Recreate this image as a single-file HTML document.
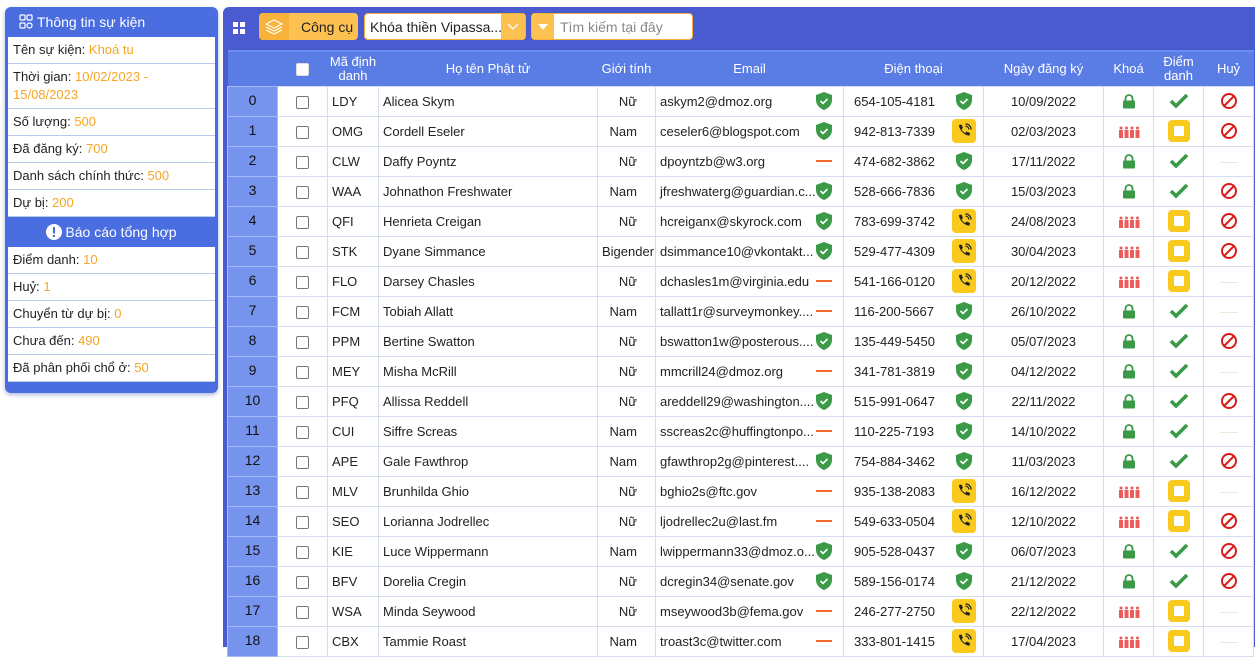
<!DOCTYPE html>
<html><head><meta charset="utf-8">
<style>
*{box-sizing:border-box;margin:0;padding:0}
body{width:1255px;height:642px;overflow:hidden;background:#fff;font-family:"Liberation Sans",sans-serif;font-size:13px;color:#222;position:relative}
.o{color:#f5a623}
#left{position:absolute;left:5px;top:7px;width:213px;height:386px;background:#4a6de0;border-radius:6px;box-shadow:0 2px 4px rgba(60,80,180,.4)}
#left .hd{height:30px;color:#fff;font-size:14px;display:flex;align-items:center;padding-left:14px}
#left .it{background:#fff;margin:0 3px 0 3px;border-bottom:1px solid #b9cbea;padding:4px 4px 4px 5px;line-height:18px;font-size:13px}
#main{position:absolute;left:223px;top:7px;width:1034px;height:640px;background:#4a5bcf;border-radius:6px 0 0 0}
.tb{position:absolute;top:6px;height:27px;border-radius:4px}
table{position:absolute;left:4px;top:43px;border-collapse:collapse;table-layout:fixed;width:1026px}
th{background:#5a7de5;color:#fff;font-weight:normal;height:35px;font-size:13px;line-height:14px;border-top:2px solid #6b8cf0}
td{height:30px;background:#fff;border:1px solid #d5deef;padding:0 4px;white-space:nowrap;overflow:hidden}
td.i{background:#7694ee;color:#111;text-align:center;font-size:14px;border-color:#a6baf3;vertical-align:top;padding-top:5px}
td.c{text-align:center}
td.g{text-align:right;padding-right:18px}
.cb{display:inline-block;width:13px;height:13px;border:1px solid #777;border-radius:2px;background:#fff;vertical-align:middle}
td.e,td.p{position:relative}
td.p{padding-left:10px}
.ic{position:absolute;top:50%;transform:translate(-50%,-50%)}
td.e .ic{left:168px}td.p .ic{left:120px}
.dash{display:inline-block;width:16px;height:2px;background:#f26b2a}
.fd{display:inline-block;width:18px;height:1px;background:#efe6d6;vertical-align:middle}
.ph{width:24px;height:24px;background:#f9c91e;border-radius:4px;display:flex;align-items:center;justify-content:center}
.bx{display:inline-block;width:22px;height:22px;background:#f9c91e;border-radius:4px;vertical-align:middle;position:relative}
.bx:after{content:"";position:absolute;left:6px;top:6px;width:10px;height:10px;background:#fff;border-radius:1px}
svg{vertical-align:middle}
</style></head><body>
<svg width="0" height="0" style="position:absolute">
<defs>
<symbol id="sh" viewBox="0 0 20 20"><path d="M10 1L18 4V9C18 14 14 17.5 10 19C6 17.5 2 14 2 9V4Z" fill="#3a9a48"/><polyline points="6.5,10 9,12.5 13.5,8" fill="none" stroke="#fff" stroke-width="1.6"/></symbol>
<symbol id="lk" viewBox="0 0 16 16"><path d="M4.5 8V5.5a3.5 3.5 0 0 1 7 0V8" fill="none" stroke="#3a9a48" stroke-width="1.8"/><rect x="2" y="7.5" width="12" height="8" rx="1" fill="#3a9a48"/></symbol>
<symbol id="pp" viewBox="0 0 22 12"><g fill="#ee5b5b"><circle cx="3" cy="2" r="1.5"/><rect x="1" y="4" width="4" height="8"/><circle cx="8.5" cy="2" r="1.5"/><rect x="6.5" y="4" width="4" height="8"/><circle cx="14" cy="2" r="1.5"/><rect x="12" y="4" width="4" height="8"/><circle cx="19.5" cy="2" r="1.5"/><rect x="17.5" y="4" width="4" height="8"/></g></symbol>
<symbol id="ck" viewBox="0 0 20 16"><polyline points="2,8 7,13 18,2" fill="none" stroke="#3a9a48" stroke-width="3.6"/></symbol>
<symbol id="bn" viewBox="0 0 18 18"><circle cx="9" cy="9" r="7" fill="none" stroke="#d81b1b" stroke-width="2"/><line x1="4" y1="14" x2="14" y2="4" stroke="#d81b1b" stroke-width="2"/></symbol>
<symbol id="tel" viewBox="0 0 16 16"><path d="M3 2l2.5-.5 1.5 3.5-1.5 1.2c.8 1.8 2 3 3.8 3.8l1.2-1.5 3.5 1.5-.5 2.5C9 13 3 7 3 2z" fill="#222"/><path d="M9.5 3a4 4 0 0 1 3.5 3.5M9.5 .8a6 6 0 0 1 5.7 5.7" fill="none" stroke="#222" stroke-width="1.2"/></symbol>
</defs></svg>

<div id="left">
 <div class="hd"><svg width="18" height="16" viewBox="0 0 18 16"><g fill="none" stroke="#fff" stroke-width="1.2"><rect x="1" y="1" width="5" height="5" rx="1"/><rect x="8" y="1" width="5" height="5" rx="1"/><rect x="1" y="9" width="5" height="5" rx="1"/><circle cx="10.5" cy="11.5" r="2.5"/></g></svg>Thông tin sự kiện</div>
 <div class="it">Tên sự kiện: <span class="o">Khoá tu</span></div>
 <div class="it">Thời gian: <span class="o">10/02/2023 - 15/08/2023</span></div>
 <div class="it">Số lượng: <span class="o">500</span></div>
 <div class="it">Đã đăng ký: <span class="o">700</span></div>
 <div class="it">Danh sách chính thức: <span class="o">500</span></div>
 <div class="it">Dự bị: <span class="o">200</span></div>
 <div class="hd" style="justify-content:center;padding-left:0"><svg width="16" height="16" viewBox="0 0 16 16" style="margin-right:3px"><circle cx="8" cy="8" r="8" fill="#fff"/><rect x="7" y="3" width="2" height="6.5" fill="#4a6de0"/><rect x="7" y="11" width="2" height="2" fill="#4a6de0"/></svg>Báo cáo tổng hợp</div>
 <div class="it">Điểm danh: <span class="o">10</span></div>
 <div class="it">Huỷ: <span class="o">1</span></div>
 <div class="it">Chuyển từ dự bị: <span class="o">0</span></div>
 <div class="it">Chưa đến: <span class="o">490</span></div>
 <div class="it">Đã phân phối chổ ở: <span class="o">50</span></div>
</div>

<div id="main">
 <svg style="position:absolute;left:10px;top:15px" width="12" height="12" viewBox="0 0 12 12"><g fill="#fff"><rect width="5" height="5"/><rect x="7" width="5" height="5"/><rect y="7" width="5" height="5"/><rect x="7" y="7" width="5" height="5"/></g></svg>
 <div class="tb" style="left:36px;width:99px;background:#fdc152;display:flex;align-items:center">
  <div style="width:30px;height:27px;background:#f9b33a;border-radius:4px 0 0 4px;display:flex;align-items:center;justify-content:center"><svg width="18" height="16" viewBox="0 0 18 16"><g fill="none" stroke="#fff" stroke-width="1.2"><path d="M9 1L17 5 9 9 1 5Z"/><path d="M1 8l8 4 8-4"/><path d="M1 11l8 4 8-4"/></g></svg></div>
  <span style="margin-left:12px;color:#222;font-size:14px">Công cụ</span></div>
 <div class="tb" style="left:141px;width:162px;background:#fff;border:1px solid #f9b33a;display:flex;align-items:center;padding-left:5px;font-size:14px">Khóa thiền Vipassa...
  <div style="position:absolute;right:0;top:0;width:24px;height:25px;background:#fdc152;display:flex;align-items:center;justify-content:center"><svg width="12" height="8" viewBox="0 0 12 8"><polyline points="1,1 6,6 11,1" fill="none" stroke="#fff" stroke-width="1.3"/></svg></div></div>
 <div class="tb" style="left:308px;width:162px;background:#fff;border:1px solid #f9b33a;display:flex;align-items:center;font-size:14px;color:#888">
  <div style="width:22px;height:25px;background:#fdc152;display:flex;align-items:center;justify-content:center;margin-right:6px"><svg width="10" height="6" viewBox="0 0 10 6"><path d="M0 0h10L5 6z" fill="#fff"/></svg></div>Tìm kiếm tại đây</div>

<table>
<colgroup><col style="width:50px"><col style="width:50px"><col style="width:51px"><col style="width:219px"><col style="width:58px"><col style="width:188px"><col style="width:140px"><col style="width:120px"><col style="width:50px"><col style="width:50px"><col style="width:50px"></colgroup>
<tr><th style="background:#5a7de5"></th><th><span class="cb" style="border-color:#ddd"></span></th><th>Mã định danh</th><th>Họ tên Phật tử</th><th>Giới tính</th><th>Email</th><th>Điện thoại</th><th>Ngày đăng ký</th><th>Khoá</th><th>Điểm danh</th><th>Huỷ</th></tr>
<tr><td class="i">0</td><td class="c"><span class="cb"></span></td><td>LDY</td><td>Alicea Skym</td><td class="g">Nữ</td><td class="e">askym2@dmoz.org<svg class="ic" width="20" height="20"><use href="#sh"/></svg></td><td class="p">654-105-4181<svg class="ic" width="20" height="20"><use href="#sh"/></svg></td><td class="c">10/09/2022</td><td class="c"><svg width="16" height="16"><use href="#lk"/></svg></td><td class="c"><svg width="20" height="16"><use href="#ck"/></svg></td><td class="c"><svg width="18" height="18"><use href="#bn"/></svg></td></tr>
<tr><td class="i">1</td><td class="c"><span class="cb"></span></td><td>OMG</td><td>Cordell Eseler</td><td class="g">Nam</td><td class="e">ceseler6@blogspot.com<svg class="ic" width="20" height="20"><use href="#sh"/></svg></td><td class="p">942-813-7339<div class="ic ph"><svg width="16" height="16"><use href="#tel"/></svg></div></td><td class="c">02/03/2023</td><td class="c"><svg width="22" height="12"><use href="#pp"/></svg></td><td class="c"><span class="bx"></span></td><td class="c"><svg width="18" height="18"><use href="#bn"/></svg></td></tr>
<tr><td class="i">2</td><td class="c"><span class="cb"></span></td><td>CLW</td><td>Daffy Poyntz</td><td class="g">Nữ</td><td class="e">dpoyntzb@w3.org<span class="ic dash"></span></td><td class="p">474-682-3862<svg class="ic" width="20" height="20"><use href="#sh"/></svg></td><td class="c">17/11/2022</td><td class="c"><svg width="16" height="16"><use href="#lk"/></svg></td><td class="c"><svg width="20" height="16"><use href="#ck"/></svg></td><td class="c"><span class="fd"></span></td></tr>
<tr><td class="i">3</td><td class="c"><span class="cb"></span></td><td>WAA</td><td>Johnathon Freshwater</td><td class="g">Nam</td><td class="e">jfreshwaterg@guardian.c...<svg class="ic" width="20" height="20"><use href="#sh"/></svg></td><td class="p">528-666-7836<svg class="ic" width="20" height="20"><use href="#sh"/></svg></td><td class="c">15/03/2023</td><td class="c"><svg width="16" height="16"><use href="#lk"/></svg></td><td class="c"><svg width="20" height="16"><use href="#ck"/></svg></td><td class="c"><svg width="18" height="18"><use href="#bn"/></svg></td></tr>
<tr><td class="i">4</td><td class="c"><span class="cb"></span></td><td>QFI</td><td>Henrieta Creigan</td><td class="g">Nữ</td><td class="e">hcreiganx@skyrock.com<svg class="ic" width="20" height="20"><use href="#sh"/></svg></td><td class="p">783-699-3742<div class="ic ph"><svg width="16" height="16"><use href="#tel"/></svg></div></td><td class="c">24/08/2023</td><td class="c"><svg width="22" height="12"><use href="#pp"/></svg></td><td class="c"><span class="bx"></span></td><td class="c"><svg width="18" height="18"><use href="#bn"/></svg></td></tr>
<tr><td class="i">5</td><td class="c"><span class="cb"></span></td><td>STK</td><td>Dyane Simmance</td><td class="g" style="padding-right:1px">Bigender</td><td class="e">dsimmance10@vkontakt...<svg class="ic" width="20" height="20"><use href="#sh"/></svg></td><td class="p">529-477-4309<div class="ic ph"><svg width="16" height="16"><use href="#tel"/></svg></div></td><td class="c">30/04/2023</td><td class="c"><svg width="22" height="12"><use href="#pp"/></svg></td><td class="c"><span class="bx"></span></td><td class="c"><svg width="18" height="18"><use href="#bn"/></svg></td></tr>
<tr><td class="i">6</td><td class="c"><span class="cb"></span></td><td>FLO</td><td>Darsey Chasles</td><td class="g">Nữ</td><td class="e">dchasles1m@virginia.edu<span class="ic dash"></span></td><td class="p">541-166-0120<div class="ic ph"><svg width="16" height="16"><use href="#tel"/></svg></div></td><td class="c">20/12/2022</td><td class="c"><svg width="22" height="12"><use href="#pp"/></svg></td><td class="c"><span class="bx"></span></td><td class="c"><span class="fd"></span></td></tr>
<tr><td class="i">7</td><td class="c"><span class="cb"></span></td><td>FCM</td><td>Tobiah Allatt</td><td class="g">Nam</td><td class="e">tallatt1r@surveymonkey....<span class="ic dash"></span></td><td class="p">116-200-5667<svg class="ic" width="20" height="20"><use href="#sh"/></svg></td><td class="c">26/10/2022</td><td class="c"><svg width="16" height="16"><use href="#lk"/></svg></td><td class="c"><svg width="20" height="16"><use href="#ck"/></svg></td><td class="c"><span class="fd"></span></td></tr>
<tr><td class="i">8</td><td class="c"><span class="cb"></span></td><td>PPM</td><td>Bertine Swatton</td><td class="g">Nữ</td><td class="e">bswatton1w@posterous....<svg class="ic" width="20" height="20"><use href="#sh"/></svg></td><td class="p">135-449-5450<svg class="ic" width="20" height="20"><use href="#sh"/></svg></td><td class="c">05/07/2023</td><td class="c"><svg width="16" height="16"><use href="#lk"/></svg></td><td class="c"><svg width="20" height="16"><use href="#ck"/></svg></td><td class="c"><svg width="18" height="18"><use href="#bn"/></svg></td></tr>
<tr><td class="i">9</td><td class="c"><span class="cb"></span></td><td>MEY</td><td>Misha McRill</td><td class="g">Nữ</td><td class="e">mmcrill24@dmoz.org<span class="ic dash"></span></td><td class="p">341-781-3819<svg class="ic" width="20" height="20"><use href="#sh"/></svg></td><td class="c">04/12/2022</td><td class="c"><svg width="16" height="16"><use href="#lk"/></svg></td><td class="c"><svg width="20" height="16"><use href="#ck"/></svg></td><td class="c"><span class="fd"></span></td></tr>
<tr><td class="i">10</td><td class="c"><span class="cb"></span></td><td>PFQ</td><td>Allissa Reddell</td><td class="g">Nữ</td><td class="e">areddell29@washington....<svg class="ic" width="20" height="20"><use href="#sh"/></svg></td><td class="p">515-991-0647<svg class="ic" width="20" height="20"><use href="#sh"/></svg></td><td class="c">22/11/2022</td><td class="c"><svg width="16" height="16"><use href="#lk"/></svg></td><td class="c"><svg width="20" height="16"><use href="#ck"/></svg></td><td class="c"><svg width="18" height="18"><use href="#bn"/></svg></td></tr>
<tr><td class="i">11</td><td class="c"><span class="cb"></span></td><td>CUI</td><td>Siffre Screas</td><td class="g">Nam</td><td class="e">sscreas2c@huffingtonpo...<span class="ic dash"></span></td><td class="p">110-225-7193<svg class="ic" width="20" height="20"><use href="#sh"/></svg></td><td class="c">14/10/2022</td><td class="c"><svg width="16" height="16"><use href="#lk"/></svg></td><td class="c"><svg width="20" height="16"><use href="#ck"/></svg></td><td class="c"><span class="fd"></span></td></tr>
<tr><td class="i">12</td><td class="c"><span class="cb"></span></td><td>APE</td><td>Gale Fawthrop</td><td class="g">Nam</td><td class="e">gfawthrop2g@pinterest....<svg class="ic" width="20" height="20"><use href="#sh"/></svg></td><td class="p">754-884-3462<svg class="ic" width="20" height="20"><use href="#sh"/></svg></td><td class="c">11/03/2023</td><td class="c"><svg width="16" height="16"><use href="#lk"/></svg></td><td class="c"><svg width="20" height="16"><use href="#ck"/></svg></td><td class="c"><svg width="18" height="18"><use href="#bn"/></svg></td></tr>
<tr><td class="i">13</td><td class="c"><span class="cb"></span></td><td>MLV</td><td>Brunhilda Ghio</td><td class="g">Nữ</td><td class="e">bghio2s@ftc.gov<span class="ic dash"></span></td><td class="p">935-138-2083<div class="ic ph"><svg width="16" height="16"><use href="#tel"/></svg></div></td><td class="c">16/12/2022</td><td class="c"><svg width="22" height="12"><use href="#pp"/></svg></td><td class="c"><span class="bx"></span></td><td class="c"><span class="fd"></span></td></tr>
<tr><td class="i">14</td><td class="c"><span class="cb"></span></td><td>SEO</td><td>Lorianna Jodrellec</td><td class="g">Nữ</td><td class="e">ljodrellec2u@last.fm<span class="ic dash"></span></td><td class="p">549-633-0504<div class="ic ph"><svg width="16" height="16"><use href="#tel"/></svg></div></td><td class="c">12/10/2022</td><td class="c"><svg width="22" height="12"><use href="#pp"/></svg></td><td class="c"><span class="bx"></span></td><td class="c"><svg width="18" height="18"><use href="#bn"/></svg></td></tr>
<tr><td class="i">15</td><td class="c"><span class="cb"></span></td><td>KIE</td><td>Luce Wippermann</td><td class="g">Nam</td><td class="e">lwippermann33@dmoz.o...<svg class="ic" width="20" height="20"><use href="#sh"/></svg></td><td class="p">905-528-0437<svg class="ic" width="20" height="20"><use href="#sh"/></svg></td><td class="c">06/07/2023</td><td class="c"><svg width="16" height="16"><use href="#lk"/></svg></td><td class="c"><svg width="20" height="16"><use href="#ck"/></svg></td><td class="c"><svg width="18" height="18"><use href="#bn"/></svg></td></tr>
<tr><td class="i">16</td><td class="c"><span class="cb"></span></td><td>BFV</td><td>Dorelia Cregin</td><td class="g">Nữ</td><td class="e">dcregin34@senate.gov<svg class="ic" width="20" height="20"><use href="#sh"/></svg></td><td class="p">589-156-0174<svg class="ic" width="20" height="20"><use href="#sh"/></svg></td><td class="c">21/12/2022</td><td class="c"><svg width="16" height="16"><use href="#lk"/></svg></td><td class="c"><svg width="20" height="16"><use href="#ck"/></svg></td><td class="c"><svg width="18" height="18"><use href="#bn"/></svg></td></tr>
<tr><td class="i">17</td><td class="c"><span class="cb"></span></td><td>WSA</td><td>Minda Seywood</td><td class="g">Nữ</td><td class="e">mseywood3b@fema.gov<span class="ic dash"></span></td><td class="p">246-277-2750<div class="ic ph"><svg width="16" height="16"><use href="#tel"/></svg></div></td><td class="c">22/12/2022</td><td class="c"><svg width="22" height="12"><use href="#pp"/></svg></td><td class="c"><span class="bx"></span></td><td class="c"><span class="fd"></span></td></tr>
<tr><td class="i">18</td><td class="c"><span class="cb"></span></td><td>CBX</td><td>Tammie Roast</td><td class="g">Nam</td><td class="e">troast3c@twitter.com<span class="ic dash"></span></td><td class="p">333-801-1415<div class="ic ph"><svg width="16" height="16"><use href="#tel"/></svg></div></td><td class="c">17/04/2023</td><td class="c"><svg width="22" height="12"><use href="#pp"/></svg></td><td class="c"><span class="bx"></span></td><td class="c"><span class="fd"></span></td></tr>
</table>
</div>
</body></html>
